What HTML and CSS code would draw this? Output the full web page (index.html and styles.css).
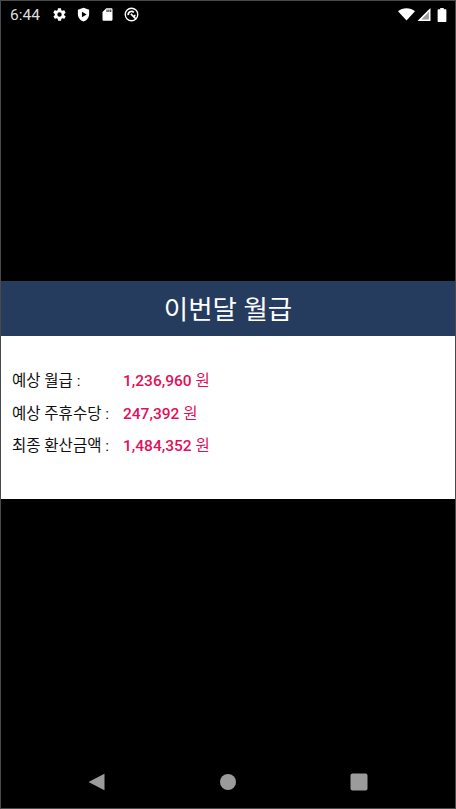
FILE: index.html
```html
<!DOCTYPE html>
<html lang="ko">
<head>
    <meta charset="UTF-8">
    <meta name="viewport" content="width=device-width, initial-scale=1.0">
    <title>이번달 월급</title>
    <link rel="stylesheet" href="styles.css">
</head>
<body>

    <div class="screen">
        <div class="status-bar">
            <span class="clock">6:44</span>
            <svg class="status-icon" viewBox="0 0 24 24"><path fill="#fff" d="M19.4 13c.1-.3.1-.7.1-1s0-.7-.1-1l2.1-1.600c.2-.2.2-.4.1-.6l-2-3.500c-.1-.2-.4-.3-.6-.2l-2.500 1c-.5-.4-1.100-.7-1.700-1l-.4-2.700c0-.2-.2-.4-.5-.4h-4c-.3 0-.5.2-.5.4l-.4 2.700c-.6.3-1.200.6-1.700 1l-2.500-1c-.2-.1-.5 0-.6.2l-2 3.500c-.1.200-.1.400.1.600L4.600 11c-.1.300-.1.700-.1 1s0 .7.1 1l-2.100 1.600c-.2.200-.2.400-.1.600l2 3.500c.1.200.4.300.6.200l2.500-1c.5.400 1.100.7 1.700 1l.4 2.700c0 .2.200.4.500.4h4c.3 0 .5-.2.500-.4l.4-2.700c.6-.3 1.200-.6 1.700-1l2.500 1c.2.100.5 0 .6-.2l2-3.500c.1-.2.100-.4-.1-.6zM12 15.500a3.500 3.500 0 1 1 0-7 3.500 3.500 0 0 1 0 7z"/></svg>
            <svg class="status-icon" viewBox="0 0 24 24"><path fill="#fff" fill-rule="evenodd" d="M12 1 3 4.500v6.500c0 5.600 3.800 10.700 9 12 5.200-1.300 9-6.400 9-12V4.500zM9.500 7.500v9l7.500-4.500z"/></svg>
            <svg class="status-icon" viewBox="0 0 24 24"><path fill="#fff" d="M18 2h-8L4 8v12c0 1.100.9 2 2 2h12c1.100 0 2-.9 2-2V4c0-1.100-.9-2-2-2zm-6 6h-1.500V4H12zm3 0h-1.500V4H15zm3 0h-1.500V4H18z"/></svg>
            <svg class="status-icon" viewBox="0 0 24 24"><g fill="none" stroke="#fff"><circle cx="12" cy="12" r="10" stroke-width="2.200"/><path stroke-width="2.800" d="M6.800 13a5.300 5.300 0 0 1 9-4.500M17.300 12.500a5.300 5.300 0 0 1-1.500 3.500"/><path stroke-width="2.400" d="m11 11 8 8"/></g></svg>
            <span class="status-spacer"></span>
            <svg class="wifi-icon" viewBox="0 0 24 18"><path fill="#fff" d="M12 17.500 0 4.500C3.300 1.700 7.400 0 12 0s8.700 1.700 12 4.500z"/></svg>
            <svg class="signal-icon" viewBox="0 0 16 16"><path fill="#9a9a9a" d="M15 1v14H1z"/><path fill="#fff" d="M16 0v16H0zm-2 4.500L4.800 14H14z"/></svg>
            <svg class="battery-icon" viewBox="0 0 10 16"><path fill="#fff" d="M3 0h4v1.500h2c.5 0 1 .4 1 1V15c0 .6-.5 1-1 1H1c-.5 0-1-.4-1-1V2.500c0-.6.5-1 1-1h2z"/></svg>
        </div>

        <div class="content">
            <div class="pay-card">
                <h1 class="pay-title">이번달 월급</h1>
                <div class="pay-body">
                    <div class="pay-row">
                        <span class="pay-label">예상 월급 :</span>
                        <span class="pay-value"><b>1,236,960</b> 원</span>
                    </div>
                    <div class="pay-row">
                        <span class="pay-label">예상 주휴수당 :</span>
                        <span class="pay-value"><b>247,392</b> 원</span>
                    </div>
                    <div class="pay-row">
                        <span class="pay-label">최종 환산금액 :</span>
                        <span class="pay-value"><b>1,484,352</b> 원</span>
                    </div>
                </div>
            </div>
        </div>

        <div class="nav-bar">
            <svg class="nav-icon" viewBox="0 0 18 18"><path fill="#9b9b9b" d="M16.500 1.200v15.600c0 .400-.3.500-.6.300L1 9.300c-.3-.1-.3-.4 0-.6L15.900.9c.3-.2.600 0 .6.300z"/></svg>
            <svg class="nav-icon" viewBox="0 0 18 18"><circle cx="9" cy="9" r="8" fill="#9b9b9b"/></svg>
            <svg class="nav-icon" viewBox="0 0 18 18"><rect x="0.500" y="0.500" width="17" height="17" rx="2" fill="#9b9b9b"/></svg>
        </div>
    </div>

</body>
</html>
```

FILE: styles.css
```css
body, html {
    margin: 0;
    padding: 0;
    height: 100%;
    background-color: #000;
    font-family: Roboto, "Noto Sans CJK KR", sans-serif;
}

.screen {
    height: 100%;
    box-sizing: border-box;
    border: 1px solid #4a4a4a;
    display: flex;
    flex-direction: column;
}

.status-bar {
    height: 27px;
    flex: none;
    padding: 0 8px 0 9px;
    display: flex;
    align-items: center;
    gap: 9px;
    color: #ddd;
    font-size: 15.500px;
}

.clock {
    margin-right: 3px;
}

.status-icon {
    width: 15px;
    height: 15px;
}

.status-spacer {
    flex: 1;
}

.wifi-icon {
    width: 17px;
    height: 13px;
    margin-right: -7px;
}

.signal-icon {
    width: 14px;
    height: 13px;
    margin-right: -3px;
}

.battery-icon {
    width: 10px;
    height: 14px;
}

.content {
    flex: 1;
    display: flex;
    flex-direction: column;
    justify-content: center;
}

.pay-title {
    margin: 0;
    height: 55px;
    line-height: 57px;
    background-color: #253c5e;
    color: #fff;
    text-align: center;
    font-size: 26.500px;
    font-weight: 400;
}

.pay-body {
    background-color: #fff;
    height: 163px;
    box-sizing: border-box;
    padding: 27px 11px 0;
}

.pay-row {
    display: flex;
    align-items: center;
    height: 32.500px;
    font-size: 15.500px;
}

.pay-label {
    width: 111px;
    color: #111;
}

.pay-value {
    color: #e0105a;
    font-size: 15.500px;
}

.pay-value b {
    font-weight: 500;
}

.nav-bar {
    height: 53px;
    padding-top: 3px;
    flex: none;
    display: flex;
    justify-content: center;
    align-items: center;
    gap: 113px;
}

.nav-icon {
    width: 18px;
    height: 18px;
}
```
